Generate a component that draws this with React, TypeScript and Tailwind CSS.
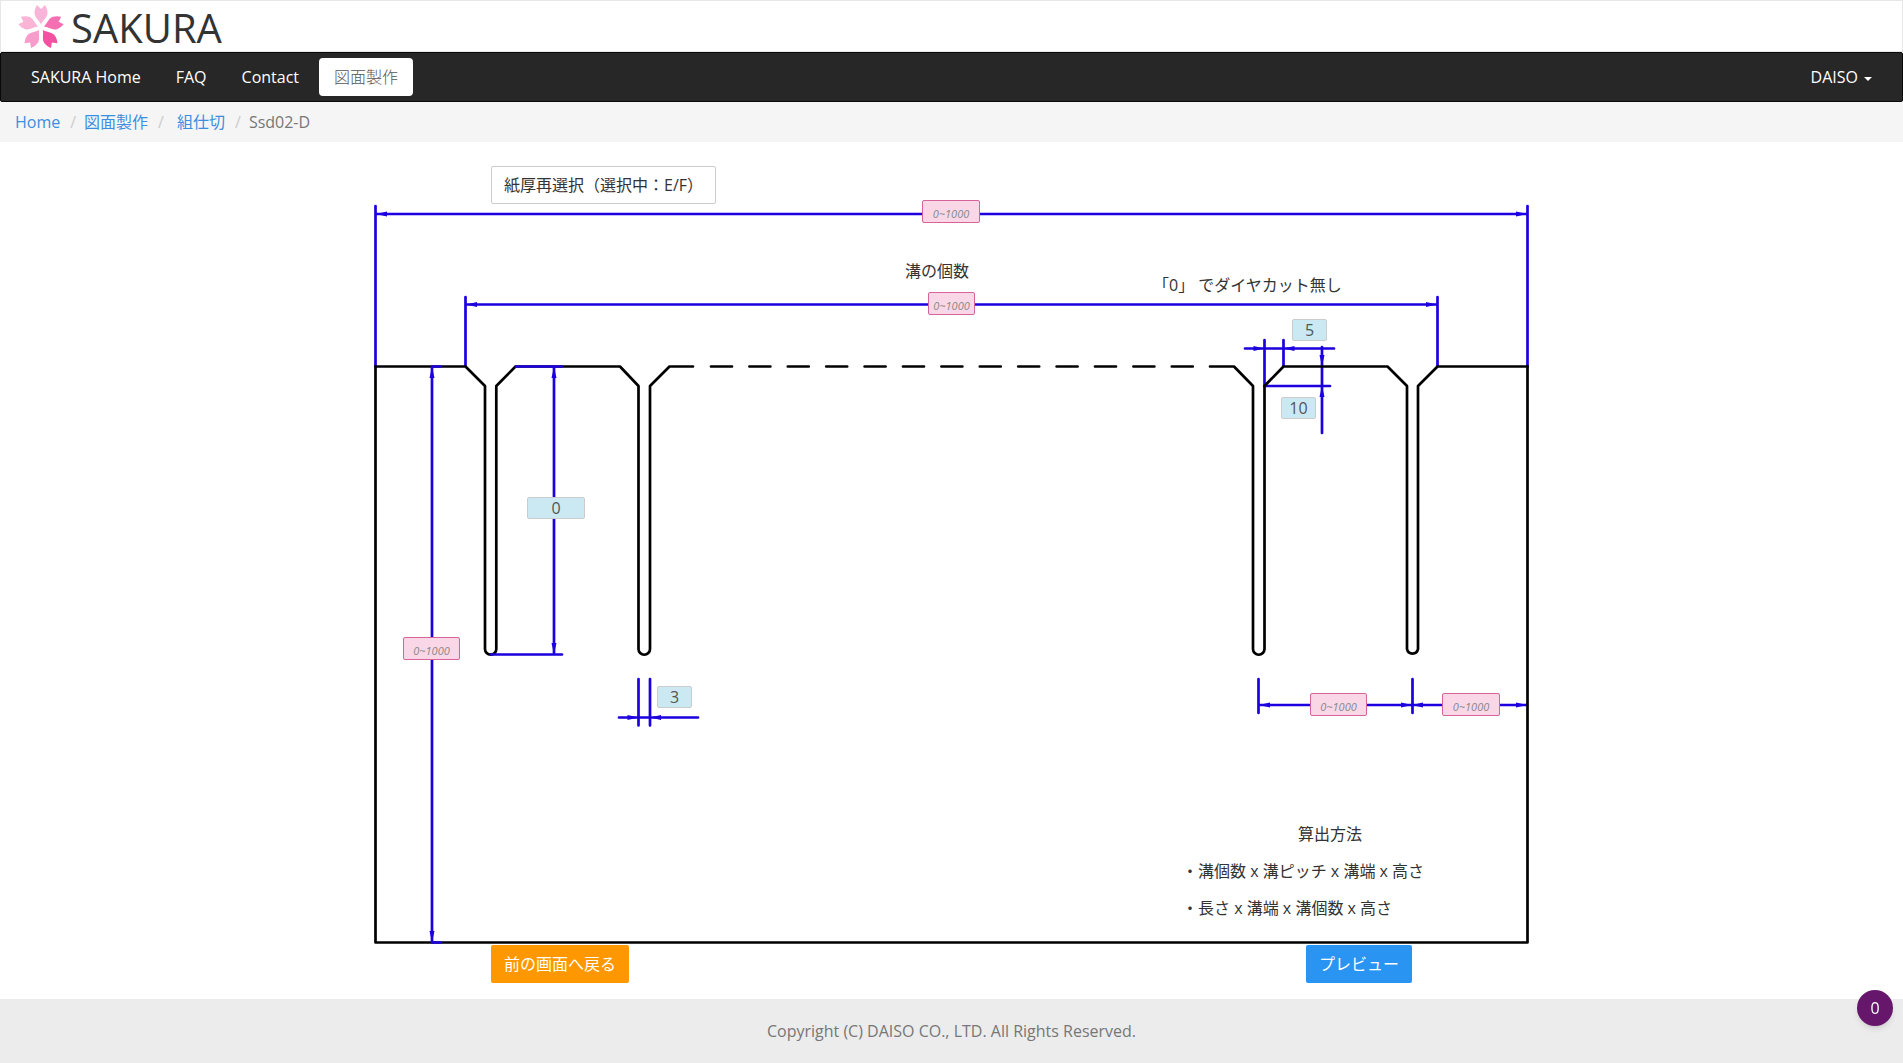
import React from 'react';

interface DimensionInputProps {
  label: string;
  className: string;
  defaultValue?: string;
}

// Pink = still has to be entered, blue = already filled in
const DimensionInput: React.FC<DimensionInputProps> = ({ label, className, defaultValue }) => (
  <input
    type="text"
    aria-label={label}
    defaultValue={defaultValue}
    placeholder="0~1000"
    className={`absolute rounded-xs border text-center ${
      defaultValue
        ? 'h-[22px] border-[#ccc] bg-[#cbe9f3] text-base leading-5 text-[#555]'
        : 'h-[23px] border-[#d6649a] bg-[#fad7e7] pt-1 text-[11px] text-[#555] placeholder:italic placeholder:text-[#888]'
    } ${className}`}
  />
);

const SakuraMark: React.FC = () => {
  const petals = ['#f9b4d9', '#f570b2', '#f252a1', '#f79ccb', '#f9b4d6'];
  return (
    <svg width="46" height="44" viewBox="-23 -22 46 44" aria-hidden="true">
      {petals.map((color, i) => (
        <path
          key={i}
          d="M0 -3 C-1.500 -7 -6.500 -10 -6.500 -14.500 C-6.500 -17.500 -5.500 -20 -4 -22.500 L0 -18.500 L4 -22.500 C5.500 -20 6.500 -17.500 6.500 -14.500 C6.500 -10 1.500 -7 0 -3 Z"
          fill={color}
          transform={`translate(0 1.500) rotate(${i * 72})`}
        />
      ))}
    </svg>
  );
};

// [tip x, tip y, rotation], 0deg points to the left
const arrows = [
  [5, 10, 0],
  [1156, 10, 180],
  [95, 100.5, 0],
  [1066, 100.5, 180],
  [61, 163, 90],
  [61, 738, 270],
  [183, 163, 90],
  [183, 450, 270],
  [267.5, 513.5, 180],
  [279, 513.5, 0],
  [888, 501, 0],
  [1041, 501, 180],
  [1041, 501, 0],
  [1156, 501, 180],
  [893.5, 144.5, 180],
  [912.5, 144.5, 0],
  [951, 162, 270],
  [951, 182, 90],
];

const Drawing: React.FC = () => (
  <svg width="1161" height="741" viewBox="0 0 1161 741" fill="none" strokeWidth="2.700" strokeLinecap="round" strokeLinejoin="round" aria-hidden="true">
    <g stroke="#1c00e0">
      <path d="M4.500 2V162M1156.500 2V162M4.500 10H1156.500" />
      <path d="M94.500 93V162M1066.500 93V162M94.500 100.500H1066.500" />
      <path d="M893.500 136V182M912.500 136V162M874 144.500H963" />
      <path d="M951 143V229M893.500 182H959" />
      <path d="M267.500 475V521.500M279 475V521.500M248 513.500H327" />
      <path d="M887.500 475V509M1041.500 475V509M887.500 501H1156" />
    </g>
    <g stroke="#000">
      <path d="M4.500 162.500V738.500H1156.500V162.500" />
      <path d="M4.500 162.500H94.500L114 182V445A5.600 5.600 0 0 0 125.300 445V182L144.500 162.500H249L267.500 182V445A5.600 5.600 0 0 0 279 445V182L298.500 162.500H322" />
      <path d="M340 162.500H837" strokeDasharray="21 17.400" />
      <path d="M839 162.500H863L882 182V445A5.600 5.600 0 0 0 893.500 445V182L912.500 162.500H1016.500L1036 182V445A5.600 5.600 0 0 0 1047 445V182L1066.500 162.500H1156.500" />
    </g>
    <g stroke="#1c00e0">
      <path d="M61 162.500V738.500M61 162.500H70M61 738.500H70" />
      <path d="M183 162.500V450.500M145 162.500H191M120 450.500H191" />
    </g>
    <g fill="#1c00e0">
      {arrows.map(([x, y, deg], i) => (
        <path key={i} d="M0 0L11 -2.500V2.500Z" transform={`translate(${x} ${y}) rotate(${deg})`} />
      ))}
    </g>
  </svg>
);

const App: React.FC = () => {
  return (
    <div className="flex min-h-screen flex-col bg-white font-['Open_Sans','Noto_Sans_CJK_JP',sans-serif] text-base leading-6 text-[#333]">
      <header className="flex h-[52px] items-center border border-[#e7e7e7] px-[17px]">
        <a href="#" className="flex items-center gap-[7px] text-[40px] leading-none">
          <SakuraMark />
          <span className="pt-1">SAKURA</span>
        </a>
      </header>

      <nav className="flex h-[50px] items-center justify-between rounded-xs border border-[#080808] bg-[#272727] px-3.5 text-white">
        <ul className="flex items-center gap-1">
          <li><a href="#" className="block px-4">SAKURA Home</a></li>
          <li><a href="#" className="block px-[15px]">FAQ</a></li>
          <li><a href="#" className="block px-4">Contact</a></li>
          <li>
            <a href="#" className="block rounded-sm bg-white px-[15px] py-[7px] font-light text-[#555]">図面製作</a>
          </li>
        </ul>
        <button type="button" className="flex items-center gap-1.5 px-4">
          DAISO
          <span className="mt-1 border-x-4 border-t-4 border-x-transparent border-t-white" />
        </button>
      </nav>

      <ol className="flex h-10 items-center bg-[#f5f5f5] px-[15px] text-[#777]">
        <li><a href="#" className="text-[#3a8fe0]">Home</a></li>
        <li className="pr-2 pl-2.5 text-[#ccc]">/</li>
        <li><a href="#" className="text-[#3a8fe0]">図面製作</a></li>
        <li className="pr-[13px] pl-2.5 text-[#ccc]">/</li>
        <li><a href="#" className="text-[#3a8fe0]">組仕切</a></li>
        <li className="pr-2 pl-2.5 text-[#ccc]">/</li>
        <li>Ssd02-D</li>
      </ol>

      <main className="mx-auto w-[1161px] grow pt-6 pb-4">
        <button type="button" className="ml-[120px] block h-[38px] rounded-xs border border-[#ccc] px-3">
          紙厚再選択（選択中：E/F）
        </button>

        <div className="relative">
          <Drawing />
          <p className="absolute top-[55px] left-[534px]">溝の個数</p>
          <p className="absolute top-[69px] left-[782px]">「0」 でダイヤカット無し</p>

          <DimensionInput label="長さ" className="-top-1 left-[551px] w-[58px]" />
          <DimensionInput label="溝の個数" className="top-[88px] left-[557px] w-[47px]" />
          <DimensionInput label="ダイヤカット幅" defaultValue="5" className="top-[115px] left-[921px] w-[35px]" />
          <DimensionInput label="ダイヤカット深さ" defaultValue="10" className="top-[193px] left-[910px] w-[35px]" />
          <DimensionInput label="溝の深さ" defaultValue="0" className="top-[293px] left-[156px] w-[58px]" />
          <DimensionInput label="高さ" className="top-[433px] left-[32px] w-[57px]" />
          <DimensionInput label="溝幅" defaultValue="3" className="top-[482px] left-[286px] w-[35px]" />
          <DimensionInput label="溝ピッチ" className="top-[489px] left-[939px] w-[57px]" />
          <DimensionInput label="溝端" className="top-[489px] left-[1071px] w-[58px]" />

          <div className="absolute top-[618px] left-[811px] flex flex-col gap-[13px]">
            <p className="pl-[54px] text-center">算出方法</p>
            <p>・溝個数 x 溝ピッチ x 溝端 x 高さ</p>
            <p>・長さ x 溝端 x 溝個数 x 高さ</p>
          </div>
        </div>

        <div className="flex justify-between px-[120px] text-white">
          <button type="button" className="h-[38px] rounded-xs bg-[#ff9800] px-[13px]">前の画面へ戻る</button>
          <button type="button" className="h-[38px] rounded-xs bg-[#2994f2] px-[13px]">プレビュー</button>
        </div>
      </main>

      <footer className="bg-[#ececec] py-5 text-center text-[#777]">
        <p>Copyright (C) DAISO CO., LTD. All Rights Reserved.</p>
      </footer>

      <button
        type="button"
        className="fixed right-2.5 bottom-[37px] size-9 rounded-full bg-[#66176b] text-white shadow-md"
      >
        0
      </button>
    </div>
  );
};

export default App;
